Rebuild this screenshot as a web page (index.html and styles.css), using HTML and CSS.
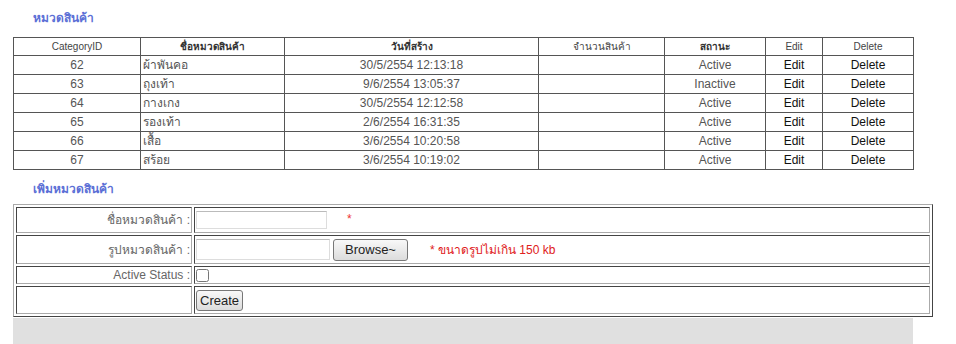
FILE: index.html
```html
<!DOCTYPE html>
<html lang="th">
<head>
  <meta charset="UTF-8">
  <title>หมวดสินค้า</title>
  <link rel="stylesheet" href="styles.css">
</head>
<body>

  <h3 class="section-title">หมวดสินค้า</h3>
  <table class="grid">
    <colgroup>
      <col class="c-id"><col class="c-name"><col class="c-date"><col class="c-count">
      <col class="c-status"><col class="c-edit"><col class="c-delete">
    </colgroup>
    <thead>
      <tr>
        <th>CategoryID</th>
        <th class="th-thai">ชื่อหมวดสินค้า</th>
        <th class="th-thai">วันที่สร้าง</th>
        <th>จำนวนสินค้า</th>
        <th class="th-thai">สถานะ</th>
        <th>Edit</th>
        <th>Delete</th>
      </tr>
    </thead>
    <tbody>
      <tr><td>62</td><td class="left">ผ้าพันคอ</td><td>30/5/2554 12:13:18</td><td></td><td>Active</td><td class="link">Edit</td><td class="link">Delete</td></tr>
      <tr><td>63</td><td class="left">ถุงเท้า</td><td>9/6/2554 13:05:37</td><td></td><td>Inactive</td><td class="link">Edit</td><td class="link">Delete</td></tr>
      <tr><td>64</td><td class="left">กางเกง</td><td>30/5/2554 12:12:58</td><td></td><td>Active</td><td class="link">Edit</td><td class="link">Delete</td></tr>
      <tr><td>65</td><td class="left">รองเท้า</td><td>2/6/2554 16:31:35</td><td></td><td>Active</td><td class="link">Edit</td><td class="link">Delete</td></tr>
      <tr><td>66</td><td class="left">เสื้อ</td><td>3/6/2554 10:20:58</td><td></td><td>Active</td><td class="link">Edit</td><td class="link">Delete</td></tr>
      <tr><td>67</td><td class="left">สร้อย</td><td>3/6/2554 10:19:02</td><td></td><td>Active</td><td class="link">Edit</td><td class="link">Delete</td></tr>
    </tbody>
  </table>

  <h3 class="section-title add-title">เพิ่มหมวดสินค้า</h3>
  <form class="add-form">
    <table class="form-table">
      <tr class="row-name">
        <td class="label">ชื่อหมวดสินค้า :</td>
        <td><input type="text" class="text-input"><span class="required">*</span></td>
      </tr>
      <tr class="row-image">
        <td class="label">รูปหมวดสินค้า :</td>
        <td><span class="file-box"></span><button type="button" class="btn btn-browse">Browse~</button><span class="note">* ขนาดรูปไม่เกิน 150 kb</span></td>
      </tr>
      <tr class="row-status">
        <td class="label">Active Status :</td>
        <td><input type="checkbox" class="check"></td>
      </tr>
      <tr class="row-submit">
        <td></td>
        <td><button type="button" class="btn btn-create">Create</button></td>
      </tr>
    </table>
  </form>
  <div class="footer-bar"></div>

</body>
</html>
```

FILE: styles.css
```css
body {
  margin: 0;
  padding: 0 0 0 13px;
  font-family: "Liberation Sans", Arial, "Noto Sans", sans-serif;
  color: #555;
  background: #fff;
}
.section-title {
  margin: 0;
  padding: 10px 0 0 20px;
  height: 37px;
  box-sizing: border-box;
  font-size: 12px;
  line-height: 16px;
  font-weight: bold;
  color: #5b6fd6;
}
.add-title {
  padding-top: 11px;
  height: 34px;
}
.grid {
  width: 901px;
  border-collapse: collapse;
  border: 1px solid #555;
  font-size: 12px;
}
.grid th,
.grid td {
  border: 1px solid #555;
  padding: 0 2px;
  text-align: center;
  height: 18px;
  line-height: 14px;
  white-space: nowrap;
}
.grid th {
  height: 17px;
  font-size: 10px;
  font-weight: normal;
  color: #444;
}
.grid th.th-thai {
  font-weight: bold;
  color: #333;
}
.grid td.left {
  text-align: left;
}
.grid td.link {
  color: #111;
}
.c-id { width: 127px; }
.c-name { width: 144px; }
.c-date { width: 254px; }
.c-count { width: 126px; }
.c-status { width: 101px; }
.c-edit { width: 57px; }
.c-delete { width: 91px; }

.form-table {
  width: 920px;
  border: 1px solid;
  border-color: #aaa #444 #444 #aaa;
  border-spacing: 2px;
  font-size: 12px;
}
.form-table td {
  border: 1px solid;
  border-color: #444 #aaa #aaa #444;
  padding: 1px 1px;
  vertical-align: middle;
  line-height: 14px;
}
.form-table td.label {
  width: 172px;
  text-align: right;
  color: #666;
}
.row-name td { height: 22px; }
.row-image td { height: 25px; }
.row-status td { height: 14px; }
.row-submit td { height: 24px; }
.text-input,
.file-box {
  display: inline-block;
  vertical-align: middle;
  width: 131px;
  height: 18px;
  margin: 0;
  padding: 0;
  box-sizing: border-box;
  border: 1px solid #ddd;
  border-top-color: #bbb;
  background: #fff;
}
.file-box {
  width: 134px;
  height: 21px;
}
.required {
  color: #e33;
  margin-left: 20px;
  font-size: 12px;
}
.btn {
  font-family: "Liberation Sans", Arial, sans-serif;
  font-size: 13px;
  color: #222;
  border: 1px solid #777;
  border-radius: 3px;
  background: linear-gradient(#f8f8f8, #dcdcdc);
  vertical-align: middle;
  padding: 0 4px;
}
.btn-browse {
  width: 75px;
  height: 22px;
  margin-left: 3px;
}
.note {
  color: #e02020;
  margin-left: 22px;
  vertical-align: middle;
}
.check {
  margin: 0;
  width: 13px;
  height: 13px;
  vertical-align: middle;
}
.btn-create {
  height: 21px;
  padding: 0 3px;
}
.footer-bar {
  width: 900px;
  height: 30px;
  margin-top: 1px;
  background: #e0e0e0;
}
```
